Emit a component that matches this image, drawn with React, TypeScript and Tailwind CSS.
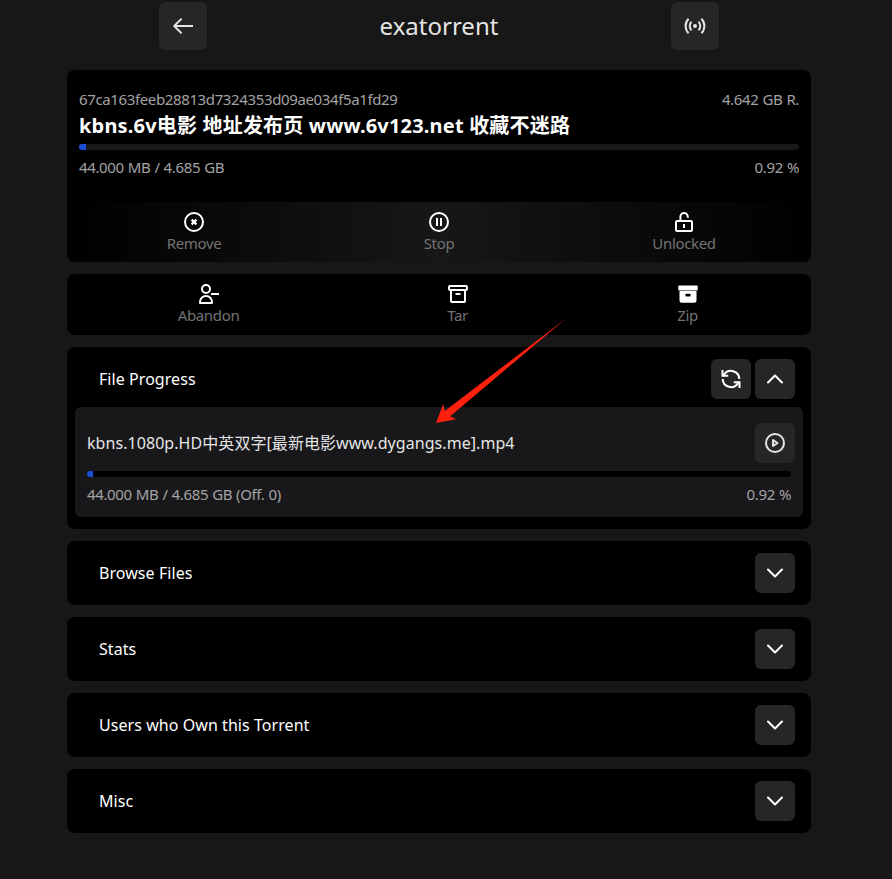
import type { ReactNode } from "react";

function Icon({ children, className = "" }: { children: ReactNode; className?: string }) {
  return (
    <svg
      viewBox="0 0 24 24"
      className={`block size-6 shrink-0 ${className}`}
      fill="none"
      stroke="currentColor"
      strokeWidth={2}
      strokeLinejoin="round"
    >
      {children}
    </svg>
  );
}

const ArrowLeft = () => (
  <Icon>
    <path d="M22 12H3.3M10.6 4.6 3.2 12l7.4 7.4" strokeWidth={1.9} />
  </Icon>
);

const Broadcast = () => (
  <Icon>
    <circle cx="12" cy="12" r="2" fill="currentColor" stroke="none" />
    <path d="M8.500 7.800a5.900 5.900 0 0 0 0 8.400M15.500 7.800a5.900 5.900 0 0 1 0 8.400M5.600 4.800a10.200 10.200 0 0 0 0 14.400M18.400 4.800a10.200 10.200 0 0 1 0 14.400" />
  </Icon>
);

const CircleX = () => (
  <Icon>
    <circle cx="12" cy="12" r="9" />
    <path d="m9.600 9.600 4.800 4.800M14.400 9.600l-4.800 4.800" strokeWidth={2.2} />
  </Icon>
);

const CirclePause = () => (
  <Icon>
    <circle cx="12" cy="12" r="9" />
    <path d="M10 8v8M14 8v8" />
  </Icon>
);

const LockOpen = () => (
  <Icon>
    <rect x="4" y="11" width="16" height="10" rx="1" />
    <path d="M8.400 11V6.700a3.700 3.700 0 0 1 7.400 0v1M12 14v4" />
  </Icon>
);

const PersonMinus = () => (
  <Icon>
    <circle cx="9" cy="7" r="4" />
    <path d="M3 21v-1a6 6 0 0 1 12 0v1zM14 12h8" />
  </Icon>
);

const Archive = () => (
  <Icon>
    <rect x="3" y="4" width="18" height="4" rx="1" />
    <path d="M5 8v11a1 1 0 0 0 1 1h12a1 1 0 0 0 1-1V8M9.500 12h5" />
  </Icon>
);

const ArchiveSolid = () => (
  <Icon>
    <g fill="currentColor" stroke="none">
      <rect x="2.300" y="3.500" width="19.400" height="5" rx="1" />
      <path
        fillRule="evenodd"
        d="M3.500 9h17v9.800a2 2 0 0 1-2 2h-13a2 2 0 0 1-2-2zM10.700 11.800a1.400 1.400 0 0 0 0 2.800h2.600a1.400 1.400 0 0 0 0-2.800z"
      />
    </g>
  </Icon>
);

const Refresh = () => (
  <Icon>
    <path d="M20.300 12A8.300 8.300 0 0 0 5 7.800L4 9M3.700 12A8.300 8.300 0 0 0 19 16.200l1-1.200" />
    <path d="M3.500 3v5.700h5.700M20.500 21v-5.700h-5.700" strokeLinejoin="miter" />
  </Icon>
);

const ChevronUp = () => (
  <Icon>
    <path d="m5 15.500 7-7 7 7" strokeLinecap="round" />
  </Icon>
);

const ChevronDown = () => (
  <Icon>
    <path d="m5 8.500 7 7 7-7" strokeLinecap="round" />
  </Icon>
);

const CirclePlay = () => (
  <Icon>
    <circle cx="12" cy="12" r="9" />
    <path d="M10 9v6l4.500-3z" />
  </Icon>
);

function SquareButton({ children, className = "size-10" }: { children: ReactNode; className?: string }) {
  return (
    <button className={`flex shrink-0 items-center justify-center rounded-md bg-[#262626] ${className}`}>
      {children}
    </button>
  );
}

function Action({ icon, label }: { icon: ReactNode; label: string }) {
  return (
    <button className="flex flex-col items-center text-white">
      {icon}
      <span className="pb-0.5 text-[15px] leading-[18px] tracking-[-0.35px] text-[#737373]">{label}</span>
    </button>
  );
}

function StatRow({ left, right }: { left: string; right: string }) {
  return (
    <div className="flex justify-between pb-0.5 text-[15px] leading-[18px] tracking-[-0.37px] text-[#a3a3a3] [word-spacing:0.5px]">
      <span>{left}</span>
      <span>{right}</span>
    </div>
  );
}

function Section({ title }: { title: string }) {
  return (
    <section className="flex h-16 items-center justify-between rounded-lg bg-black pr-4 pl-8">
      <h2>{title}</h2>
      <SquareButton>
        <ChevronDown />
      </SquareButton>
    </section>
  );
}

export default function App() {
  return (
    <div className="relative h-[879px] w-[892px] overflow-hidden bg-[#171717] font-['Noto_Sans','Noto_Sans_CJK_SC',sans-serif] text-base tracking-[0.06px] text-white">
      <div className="w-[878px]">
        <header className="mx-auto flex w-[560px] items-center justify-between pt-0.5 text-[#e5e5e5]">
          <SquareButton className="size-12">
            <ArrowLeft />
          </SquareButton>
          <h1 className="text-2xl tracking-normal">exatorrent</h1>
          <SquareButton className="size-12">
            <Broadcast />
          </SquareButton>
        </header>

        <main className="mx-auto mt-5 flex w-[744px] flex-col gap-3">
          <section className="overflow-hidden rounded-lg bg-black">
            <div className="h-[132px] px-3 pt-5">
              <StatRow left="67ca163feeb28813d7324353d09ae034f5a1fd29" right="4.642 GB R." />
              <p className="mt-0.5 text-xl font-bold tracking-[0.18px] whitespace-nowrap">
                kbns.6v电影 地址发布页 www.6v123.net 收藏不迷路
              </p>
              <div className="mt-1 mb-2 h-1.5 overflow-hidden rounded-full bg-[#18181b]">
                <div className="h-full w-[7px] bg-[#1d4ed8]" />
              </div>
              <StatRow left="44.000 MB / 4.685 GB" right="0.92 %" />
            </div>
            <div className="grid h-[60px] grid-cols-[245px_245px_245px] justify-center bg-linear-to-r/srgb from-black via-[#171717] to-black pt-2">
              <Action icon={<CircleX />} label="Remove" />
              <Action icon={<CirclePause />} label="Stop" />
              <Action icon={<LockOpen />} label="Unlocked" />
            </div>
          </section>

          <section className="grid h-[61px] grid-cols-[283px_215px_245px] rounded-lg bg-black pt-2">
            <Action icon={<PersonMinus />} label="Abandon" />
            <Action icon={<Archive />} label="Tar" />
            <Action icon={<ArchiveSolid />} label="Zip" />
          </section>

          <section className="h-[182px] rounded-lg bg-black px-2 pt-3">
            <div className="flex items-center gap-1 pr-2 pl-6">
              <h2 className="grow">File Progress</h2>
              <SquareButton>
                <Refresh />
              </SquareButton>
              <SquareButton>
                <ChevronUp />
              </SquareButton>
            </div>
            <div className="mt-2 h-[110px] rounded-md bg-[#18181b] px-3 pt-4 text-[#e5e5e5]">
              <div className="-mr-1 flex items-center justify-between">
                <span className="whitespace-nowrap">kbns.1080p.HD中英双字[最新电影www.dygangs.me].mp4</span>
                <SquareButton>
                  <CirclePlay />
                </SquareButton>
              </div>
              <div className="mt-2 mb-2 h-1.5 overflow-hidden rounded-full bg-black">
                <div className="h-full w-1.5 bg-[#1d4ed8]" />
              </div>
              <StatRow left="44.000 MB / 4.685 GB (Off. 0)" right="0.92 %" />
            </div>
          </section>

          <Section title="Browse Files" />
          <Section title="Stats" />
          <Section title="Users who Own this Torrent" />
          <Section title="Misc" />
        </main>
      </div>

      <svg
        className="pointer-events-none absolute top-[310px] left-[430px] h-[120px] w-[140px]"
        viewBox="430 310 140 120"
      >
        <path d="M436 423 443.300 404 444.700 411 566 318.500 450.200 416.300 456.300 419.300z" fill="#ff2010" />
      </svg>
    </div>
  );
}
